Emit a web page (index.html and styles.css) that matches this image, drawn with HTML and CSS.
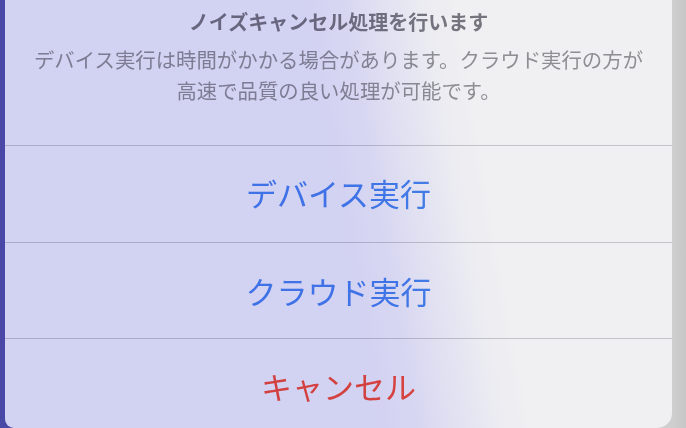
FILE: index.html
```html
<!DOCTYPE html>
<html lang="ja">
<head>
<meta charset="utf-8">
<link rel="stylesheet" href="styles.css">
</head>
<body>
<div class="backdrop">
  <div class="sheet">
    <div class="header">
      <div class="title">ノイズキャンセル処理を行います</div>
      <div class="message">デバイス実行は時間がかかる場合があります。クラウド実行の方が<br>高速で品質の良い処理が可能です。</div>
    </div>
    <div class="action action-first">デバイス実行</div>
    <div class="action">クラウド実行</div>
    <div class="action action-cancel">キャンセル</div>
    <div class="tint"></div>
  </div>
</div>
</body>
</html>
```
FILE: styles.css
```css
html, body {
  margin: 0;
  padding: 0;
}
body {
  width: 686px;
  height: 428px;
  overflow: hidden;
  font-family: "Noto Sans CJK JP", "Noto Sans", sans-serif;
}
.backdrop {
  width: 686px;
  height: 428px;
  display: flex;
  background: linear-gradient(90deg, #4a48a6 0, #4a48a6 50%, #cfcfcf 50%, #cfcfcf 98%, #c6c6c6 100%);
}
.sheet {
  position: relative;
  margin-left: 5px;
  width: 667px;
  height: 428px;
  background: #f0f0f2;
  border-radius: 0 0 15px 9px;
  overflow: hidden;
  display: flex;
  flex-direction: column;
}
.header {
  height: 146px;
  box-sizing: border-box;
  border-bottom: 1px solid #c4c4c8;
  padding-top: 10px;
  text-align: center;
}
.title {
  font-size: 20px;
  line-height: 24px;
  font-weight: 700;
  color: #76757f;
}
.message {
  margin-top: 10px;
  font-size: 20.4px;
  line-height: 31px;
  color: #8e8e93;
}
.action {
  height: 96px;
  box-sizing: border-box;
  border-bottom: 1px solid #c4c4c8;
  display: flex;
  align-items: center;
  justify-content: center;
  font-size: 31px;
  color: #4682e6;
}
.action-first {
  height: 97px;
  padding-bottom: 3px;
}
.action-cancel {
  border-bottom: none;
  flex: 1;
  color: #f04a40;
  padding-top: 4px;
}
.tint {
  position: absolute;
  inset: 0;
  pointer-events: none;
  mix-blend-mode: multiply;
  background: linear-gradient(80deg, #e0dfff 0%, #e0dfff 50%, #e6e5ff 56%, #f0f0ff 61%, #fafaff 66%, #ffffff 71%, #ffffff 100%);
}
```
